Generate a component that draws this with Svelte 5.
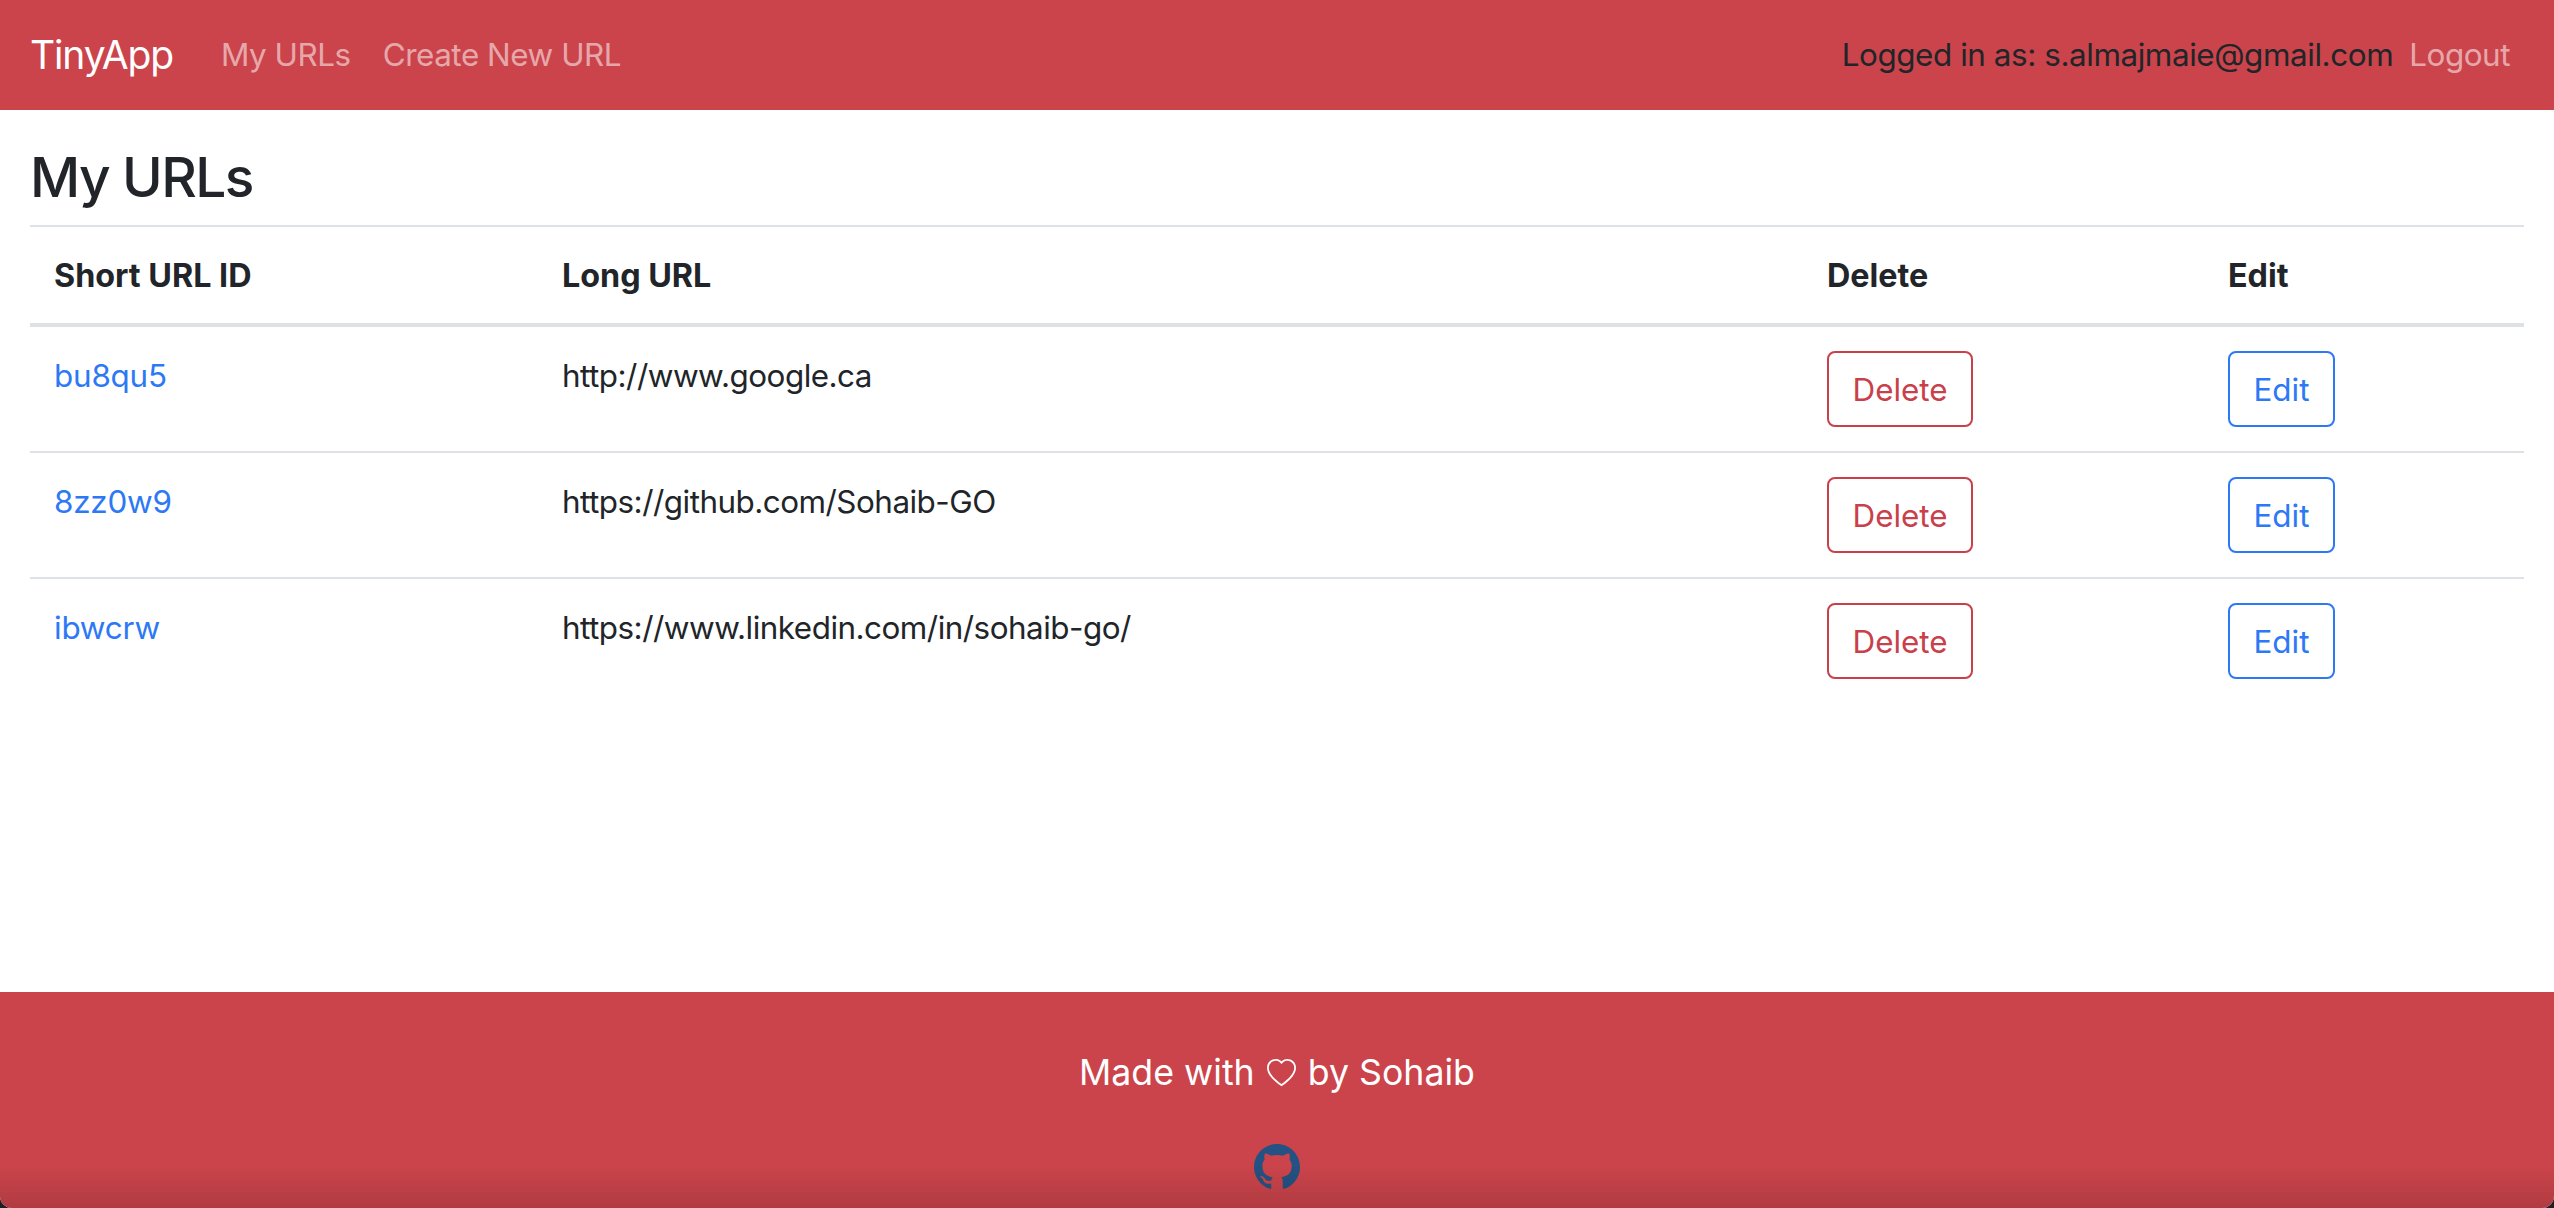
<script>
  const rows = [
    { id: 'bu8qu5', url: 'http://www.google.ca' },
    { id: '8zz0w9', url: 'https://github.com/Sohaib-GO' },
    { id: 'ibwcrw', url: 'https://www.linkedin.com/in/sohaib-go/' }
  ];
</script>

<div class="page">
  <nav class="navbar">
    <a class="brand" href="#top">TinyApp</a>
    <div class="links">
      <a href="#urls">My URLs</a>
      <a href="#new">Create New URL</a>
    </div>
    <div class="user">
      <span class="who">Logged in as: s.almajmaie@gmail.com</span>
      <a href="#logout">Logout</a>
    </div>
  </nav>

  <main>
    <h1>My URLs</h1>
    <table>
      <thead>
        <tr>
          <th class="c1">Short URL ID</th>
          <th class="c2">Long URL</th>
          <th class="c3">Delete</th>
          <th class="c4">Edit</th>
        </tr>
      </thead>
      <tbody>
        {#each rows as row}
          <tr>
            <td class="text"><a class="short" href="#{row.id}">{row.id}</a></td>
            <td class="text long">{row.url}</td>
            <td><button class="btn danger">Delete</button></td>
            <td><button class="btn primary">Edit</button></td>
          </tr>
        {/each}
      </tbody>
    </table>
  </main>

  <footer>
    <p>Made with
      <svg class="heart" viewBox="0 0 16 16" fill="currentColor"><path d="m8 2.748-.717-.737C5.6.281 2.514.878 1.4 3.053c-.523 1.023-.641 2.5.314 4.385.92 1.815 2.834 3.989 6.286 6.357 3.452-2.368 5.365-4.542 6.286-6.357.955-1.886.838-3.362.314-4.385C13.486.878 10.4.28 8.717 2.01L8 2.748zM8 15C-7.333 4.868 3.279-3.04 7.824 1.143c.06.055.119.112.176.171a3.12 3.12 0 0 1 .176-.17C12.72-3.042 23.333 4.867 8 15z"/></svg>
      by Sohaib</p>
    <svg class="gh" viewBox="0 0 16 16" fill="currentColor"><path d="M8 0C3.58 0 0 3.58 0 8c0 3.54 2.29 6.53 5.47 7.59.4.07.55-.17.55-.38 0-.19-.01-.82-.01-1.49-2.01.37-2.53-.49-2.69-.94-.09-.23-.48-.94-.82-1.13-.28-.15-.68-.52-.01-.53.63-.01 1.08.58 1.23.82.72 1.21 1.87.87 2.33.66.07-.52.28-.87.51-1.07-1.78-.2-3.64-.89-3.64-3.95 0-.87.31-1.59.82-2.15-.08-.2-.36-1.02.08-2.12 0 0 .67-.21 2.2.82.64-.18 1.32-.27 2-.27.68 0 1.36.09 2 .27 1.53-1.04 2.2-.82 2.2-.82.44 1.1.16 1.92.08 2.12.51.56.82 1.27.82 2.15 0 3.07-1.87 3.75-3.65 3.95.29.25.54.73.54 1.48 0 1.07-.01 1.93-.01 2.2 0 .21.15.46.55.38A8.012 8.012 0 0 0 16 8c0-4.42-3.58-8-8-8z"/></svg>
    <div class="shade"></div>
  </footer>
</div>

<style>
  :global(body) {
    margin: 0;
    background: #1c1f24;
  }
  .page {
    height: 1208px;
    display: flex;
    flex-direction: column;
    background: #fff;
    font-family: Inter, "Liberation Sans", sans-serif;
    font-size: 31.4px;
    line-height: 48px;
    color: #212529;
    border-radius: 0 0 12px 12px;
    overflow: hidden;
  }
  a { text-decoration: none; }
  .navbar {
    height: 110px;
    flex: none;
    display: flex;
    align-items: center;
    background: #cb444b;
    padding: 0 44px 0 30px;
    box-sizing: border-box;
  }
  .brand {
    color: #fff;
    font-size: 39px;
    letter-spacing: -1.15px;
    margin-right: 48px;
  }
  .links {
    display: flex;
    gap: 32px;
  }
  .links a, .user a {
    color: rgba(255, 255, 255, 0.55);
    letter-spacing: -0.45px;
  }
  .user {
    margin-left: auto;
    display: flex;
    gap: 16px;
  }
  .who { color: #212529; letter-spacing: -0.42px; }
  main {
    flex: 1;
    padding: 0 30px;
  }
  h1 {
    margin: 34px 0 15px;
    font-size: 55px;
    line-height: 66px;
    font-weight: 500;
    letter-spacing: -1.6px;
  }
  table {
    width: 100%;
    border-collapse: separate;
    border-spacing: 0;
    table-layout: fixed;
  }
  th, td {
    box-sizing: border-box;
    padding: 24px;
    text-align: left;
    vertical-align: top;
  }
  th {
    font-weight: 700;
    font-size: 32.3px;
    padding-top: 25px;
    padding-bottom: 23px;
    border-top: 2px solid #dee2e6;
    border-bottom: 4px solid #dee2e6;
  }
  td { border-bottom: 2px solid #dee2e6; }
  td.text { padding-top: 25px; padding-bottom: 23px; }
  tbody tr:last-child td { border-bottom: none; }
  .c1 { width: 508px; }
  .c2 { width: 1265px; }
  .c3 { width: 401px; }
  .short { color: #2d78f5; letter-spacing: -0.2px; }
  .long { color: #212529; letter-spacing: -0.5px; }
  .btn {
    display: block;
    height: 76px;
    padding: 1px 23.5px 0;
    font: inherit;
    background: #fff;
    border: 2px solid;
    border-radius: 8px;
  }
  .danger { color: #c9404a; border-color: #c9404a; }
  .primary { color: #2d78f5; border-color: #2d78f5; }
  footer {
    position: relative;
    flex: none;
    height: 216px;
    background: #cb444b;
    color: #fff;
    text-align: center;
    box-sizing: border-box;
    padding-top: 56px;
  }
  footer p { margin: 0; font-size: 35.7px; line-height: 48px; }
  .heart { width: 29px; height: 29px; margin: 0 2px; vertical-align: -3px; }
  .gh {
    display: block;
    width: 46px;
    height: 46px;
    margin: 48px auto 0;
    color: #245282;
  }
  .shade {
    position: absolute;
    left: 0;
    right: 0;
    bottom: 0;
    height: 44px;
    background: linear-gradient(to bottom, rgba(0,0,0,0), rgba(0,0,0,0.13));
  }
</style>
